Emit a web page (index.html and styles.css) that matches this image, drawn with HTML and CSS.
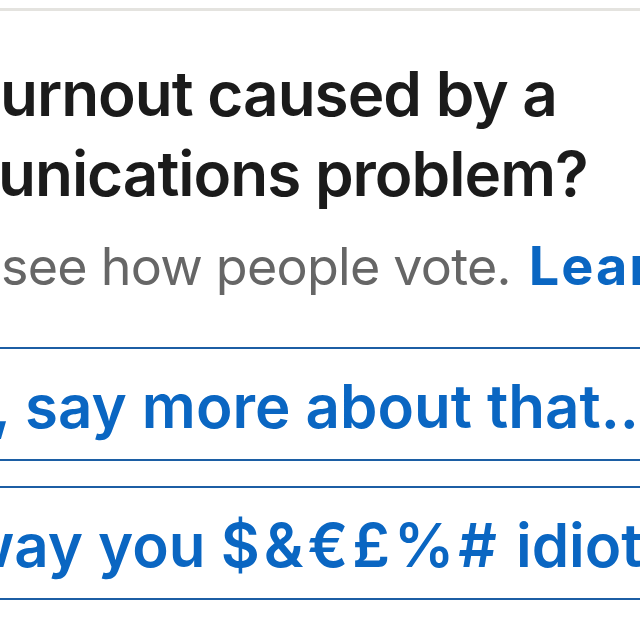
FILE: index.html
```html
<!DOCTYPE html>
<html lang="en">
<head>
<meta charset="utf-8">
<title>Poll</title>
<link rel="stylesheet" href="styles.css">
</head>
<body>
<div class="card">
  <h1 class="question"><span class="q1">urnout caused by a</span><span class="q2">unications problem?</span></h1>
  <p class="note">see how people vote. <a class="learn" href="#">Learn more</a></p>
  <div class="options">
    <div class="option"><span class="opt-text opt1">, say more about that...</span></div>
    <div class="option"><span class="opt-text opt2">way you <span class="sym">$&amp;€£%#</span> idiot</span></div>
  </div>
</div>
</body>
</html>
```
FILE: styles.css
```css
html, body {
  margin: 0;
  padding: 0;
  background: #ffffff;
  overflow: hidden;
}
body {
  width: 640px;
  height: 640px;
  font-family: Inter, "Noto Sans", "Liberation Sans", sans-serif;
}
.card {
  margin-top: 8px;
  border-top: 3px solid #e4e3df;
  padding-top: 43px;
}
.question {
  margin: 0;
  font-size: 62px;
  line-height: 80px;
  font-weight: 600;
  color: #1b1b1b;
  white-space: nowrap;
  letter-spacing: -1px;
}
.q1, .q2 {
  display: block;
}
.q1 { margin-left: 0; }
.q2 { margin-left: -2px; }
.note {
  margin: 21px 0 0 0;
  font-size: 52px;
  line-height: 64px;
  height: 64px;
  font-weight: 400;
  color: #666666;
  white-space: nowrap;
  margin-left: 1px;
  letter-spacing: -0.75px;
}
.learn {
  color: #0a66c2;
  font-size: 54px;
  line-height: 0;
  font-weight: 700;
  text-decoration: none;
  letter-spacing: 2px;
  margin-left: 4px;
}
.options {
  margin-top: 48px;
  display: flex;
  flex-direction: column;
  gap: 25px;
}
.option {
  border-top: 2px solid #1c5ea4;
  border-bottom: 2px solid #1c5ea4;
  padding-top: 5px;
  height: 105px;
  white-space: nowrap;
  overflow: hidden;
}
.opt-text {
  display: block;
  font-size: 60px;
  line-height: 104px;
  font-weight: 600;
  color: #0a66c2;
}
.opt1 { margin-left: -8px; }
.opt2 { margin-left: -36px; }
.sym { letter-spacing: 4px; }
```
